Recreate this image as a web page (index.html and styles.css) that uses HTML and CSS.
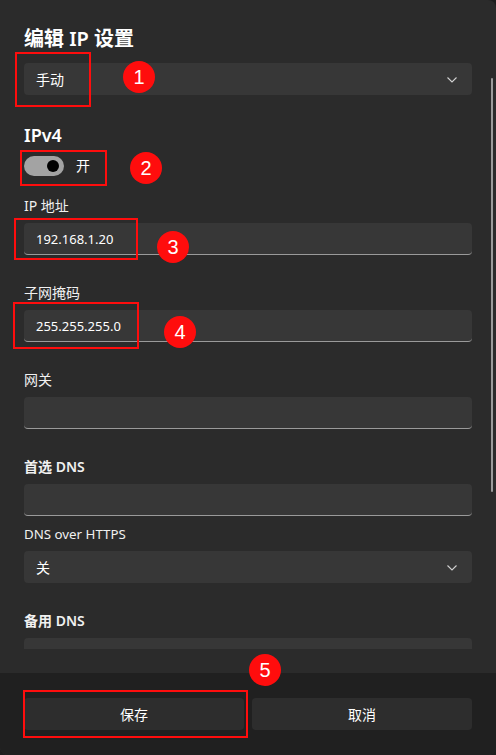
FILE: index.html
```html
<!DOCTYPE html>
<html lang="zh-CN">
<head>
<meta charset="utf-8">
<title>编辑 IP 设置</title>
<link rel="stylesheet" href="styles.css">
</head>
<body>
<div class="window">
  <div class="content">
    <h1 class="title">编辑 IP 设置</h1>
    <div class="select"><span>手动</span><svg class="chev" width="10" height="6" viewBox="0 0 10 6"><path d="M0.5 0.5 L5 5 L9.5 0.5" fill="none" stroke="#d0d0d0" stroke-width="1.1"/></svg></div>

    <h2 class="section">IPv4</h2>
    <div class="toggle-row">
      <div class="toggle"><div class="knob"></div></div>
      <span class="toggle-label">开</span>
    </div>

    <div class="group first">
      <div class="label">IP 地址</div>
      <div class="input"><span class="value">192.168.1.20</span></div>
    </div>
    <div class="group">
      <div class="label">子网掩码</div>
      <div class="input"><span class="value">255.255.255.0</span></div>
    </div>
    <div class="group">
      <div class="label">网关</div>
      <div class="input"></div>
    </div>
    <div class="group">
      <div class="label strong">首选 DNS</div>
      <div class="input"></div>
    </div>
    <div class="group near">
      <div class="label latin">DNS over HTTPS</div>
      <div class="select"><span>关</span><svg class="chev" width="10" height="6" viewBox="0 0 10 6"><path d="M0.5 0.5 L5 5 L9.5 0.5" fill="none" stroke="#d0d0d0" stroke-width="1.1"/></svg></div>
    </div>
    <div class="group">
      <div class="label strong">备用 DNS</div>
      <div class="input"></div>
    </div>
  </div>
  <div class="footer">
    <button class="btn">保存</button>
    <button class="btn">取消</button>
  </div>

  <div class="scrollbar"></div>

  <div class="mark box1"></div>
  <div class="mark box2"></div>
  <div class="mark box3"></div>
  <div class="mark box4"></div>
  <div class="mark box5"></div>
  <div class="num n1">1</div>
  <div class="num n2">2</div>
  <div class="num n3">3</div>
  <div class="num n4">4</div>
  <div class="num n5">5</div>
</div>
</body>
</html>
```
FILE: styles.css
```css
* { box-sizing: border-box; }
html, body { margin: 0; padding: 0; background: #1e1e1e; }
body {
  width: 496px; height: 755px; overflow: hidden;
  font-family: "Noto Sans", "Noto Sans CJK SC", sans-serif;
  color: #ffffff;
}
.window {
  position: relative;
  width: 496px; height: 755px;
  background: #2b2b2b;
  border-radius: 0 8px 8px 8px;
  overflow: hidden;
  display: flex; flex-direction: column;
}
.content {
  height: 649px;
  margin-bottom: 24px;
  flex: none;
  overflow: hidden;
  padding: 25px 24px 0 24px;
}
.title {
  margin: 0;
  font-size: 20px; line-height: 28px; font-weight: 600;
}
.select {
  margin-top: 10px;
  height: 32px;
  background: #373737;
  border-radius: 4px;
  display: flex; align-items: center; justify-content: space-between;
  padding: 0 15px 0 12px;
  font-size: 14px;
}
.chev { display: block; margin-top: 1px; }
.section {
  margin: 28px 0 0 0;
  font-size: 18px; line-height: 24px; font-weight: 600;
}
.toggle-row {
  margin-top: 9px;
  height: 20px;
  display: flex; align-items: center;
}
.toggle {
  width: 40px; height: 20px;
  background: #a3a3a3;
  border-radius: 10px;
  display: flex; align-items: center; justify-content: flex-end;
  padding-right: 5px;
}
.knob { width: 12px; height: 12px; border-radius: 50%; background: #000; }
.toggle-label { margin-left: 12px; font-size: 14px; line-height: 20px; }
.group { margin-top: 28px; }
.group.first { margin-top: 20px; }
.group.near { margin-top: 8px; }
.group .select { margin-top: 0; }
.label {
  font-size: 14px; line-height: 20px; margin-bottom: 7px; color: #f0f0f0;
}
.label.latin { font-size: 13.3px; }
.label.strong { font-weight: 600; }
.input {
  height: 32px;
  background: #373737;
  border-radius: 4px;
  border-bottom: 1px solid #9a9a9a;
  display: flex; align-items: center;
  padding: 0 12px;
  font-size: 14px;
}
.value { font-size: 13px; }
.footer {
  flex: 1;
  background: #202020;
  display: flex; gap: 8px;
  padding: 25px 24px 0 24px;
}
.btn {
  flex: 1; height: 32px;
  background: #2d2d2d;
  border: none; border-radius: 4px;
  color: #fff;
  font-family: "Noto Sans", "Noto Sans CJK SC", sans-serif;
  font-size: 14px;
}
.scrollbar {
  position: absolute; left: 491px; top: 78px;
  width: 2px; height: 414px;
  background: #9b9b9b; border-radius: 1px;
}
.mark { position: absolute; border: 2px solid #ff0d0d; }
.box1 { left: 15px; top: 52px; width: 76px; height: 55px; }
.box2 { left: 20px; top: 150px; width: 87px; height: 36px; }
.box3 { left: 14px; top: 218px; width: 124px; height: 42px; }
.box4 { left: 13px; top: 302px; width: 126px; height: 47px; }
.box5 { left: 23px; top: 690px; width: 225px; height: 48px; }
.num {
  position: absolute;
  width: 32px; height: 32px; border-radius: 50%;
  background: #ff0d0d; color: #fff;
  display: flex; align-items: center; justify-content: center;
  font-family: "Liberation Sans", Arial, sans-serif;
  font-size: 20px;
}
.n1 { left: 123px; top: 61px; }
.n2 { left: 130px; top: 152px; }
.n3 { left: 157px; top: 231px; }
.n4 { left: 164px; top: 316px; }
.n5 { left: 249px; top: 654px; }
```
